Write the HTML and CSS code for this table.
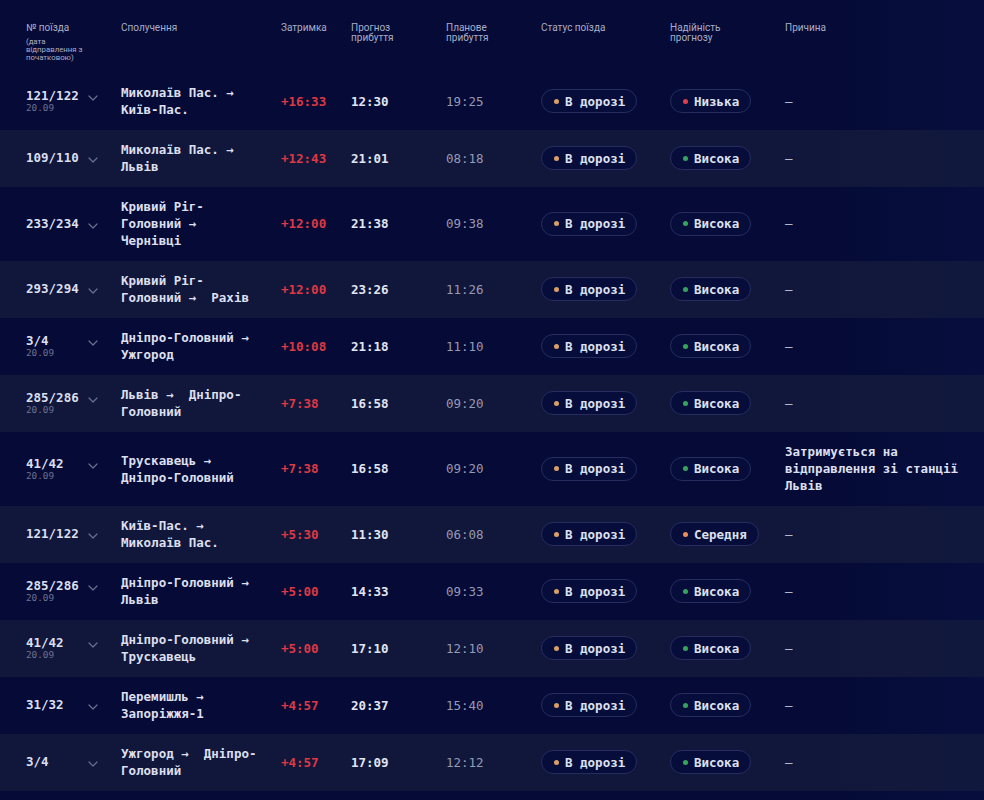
FILE: index.html
```html
<!DOCTYPE html>
<html lang="uk">
<head>
<meta charset="utf-8">
<title>Затримки поїздів</title>
<link rel="stylesheet" href="styles.css">
</head>
<body>
<div class="board">
  <div class="head">
    <div class="h-cell h-train">№ поїзда<span class="h-sub">(дата<br>відправлення з<br>початковою)</span></div>
    <div class="h-cell">Сполучення</div>
    <div class="h-cell">Затримка</div>
    <div class="h-cell">Прогноз<br>прибуття</div>
    <div class="h-cell">Планове<br>прибуття</div>
    <div class="h-cell">Статус поїзда</div>
    <div class="h-cell">Надійність<br>прогнозу</div>
    <div class="h-cell">Причина</div>
  </div>

  <div class="row">
    <div class="train"><div class="num-stack"><span class="num">121/122</span><span class="date">20.09</span></div><svg class="chev" viewBox="0 0 10 6"><polyline points="1,1 5,5 9,1"/></svg></div>
    <div class="route">Миколаїв Пас. →&nbsp; Київ-Пас.</div>
    <div class="delay">+16:33</div>
    <div class="fc">12:30</div>
    <div class="plan">19:25</div>
    <div><span class="badge"><i class="dot amber"></i>В дорозі</span></div>
    <div><span class="badge"><i class="dot red"></i>Низька</span></div>
    <div class="reason none">—</div>
  </div>

  <div class="row">
    <div class="train"><div class="num-stack"><span class="num">109/110</span></div><svg class="chev" viewBox="0 0 10 6"><polyline points="1,1 5,5 9,1"/></svg></div>
    <div class="route">Миколаїв Пас. →&nbsp; Львів</div>
    <div class="delay">+12:43</div>
    <div class="fc">21:01</div>
    <div class="plan">08:18</div>
    <div><span class="badge"><i class="dot amber"></i>В дорозі</span></div>
    <div><span class="badge"><i class="dot green"></i>Висока</span></div>
    <div class="reason none">—</div>
  </div>

  <div class="row">
    <div class="train"><div class="num-stack"><span class="num">233/234</span></div><svg class="chev" viewBox="0 0 10 6"><polyline points="1,1 5,5 9,1"/></svg></div>
    <div class="route">Кривий Ріг-Головний →&nbsp; Чернівці</div>
    <div class="delay">+12:00</div>
    <div class="fc">21:38</div>
    <div class="plan">09:38</div>
    <div><span class="badge"><i class="dot amber"></i>В дорозі</span></div>
    <div><span class="badge"><i class="dot green"></i>Висока</span></div>
    <div class="reason none">—</div>
  </div>

  <div class="row">
    <div class="train"><div class="num-stack"><span class="num">293/294</span></div><svg class="chev" viewBox="0 0 10 6"><polyline points="1,1 5,5 9,1"/></svg></div>
    <div class="route">Кривий Ріг-Головний →&nbsp; Рахів</div>
    <div class="delay">+12:00</div>
    <div class="fc">23:26</div>
    <div class="plan">11:26</div>
    <div><span class="badge"><i class="dot amber"></i>В дорозі</span></div>
    <div><span class="badge"><i class="dot green"></i>Висока</span></div>
    <div class="reason none">—</div>
  </div>

  <div class="row">
    <div class="train"><div class="num-stack"><span class="num">3/4</span><span class="date">20.09</span></div><svg class="chev" viewBox="0 0 10 6"><polyline points="1,1 5,5 9,1"/></svg></div>
    <div class="route">Дніпро-Головний →&nbsp; Ужгород</div>
    <div class="delay">+10:08</div>
    <div class="fc">21:18</div>
    <div class="plan">11:10</div>
    <div><span class="badge"><i class="dot amber"></i>В дорозі</span></div>
    <div><span class="badge"><i class="dot green"></i>Висока</span></div>
    <div class="reason none">—</div>
  </div>

  <div class="row">
    <div class="train"><div class="num-stack"><span class="num">285/286</span><span class="date">20.09</span></div><svg class="chev" viewBox="0 0 10 6"><polyline points="1,1 5,5 9,1"/></svg></div>
    <div class="route">Львів →&nbsp; Дніпро-Головний</div>
    <div class="delay">+7:38</div>
    <div class="fc">16:58</div>
    <div class="plan">09:20</div>
    <div><span class="badge"><i class="dot amber"></i>В дорозі</span></div>
    <div><span class="badge"><i class="dot green"></i>Висока</span></div>
    <div class="reason none">—</div>
  </div>

  <div class="row">
    <div class="train"><div class="num-stack"><span class="num">41/42</span><span class="date">20.09</span></div><svg class="chev" viewBox="0 0 10 6"><polyline points="1,1 5,5 9,1"/></svg></div>
    <div class="route">Трускавець →&nbsp; Дніпро-Головний</div>
    <div class="delay">+7:38</div>
    <div class="fc">16:58</div>
    <div class="plan">09:20</div>
    <div><span class="badge"><i class="dot amber"></i>В дорозі</span></div>
    <div><span class="badge"><i class="dot green"></i>Висока</span></div>
    <div class="reason">Затримується на відправлення зі станції Львів</div>
  </div>

  <div class="row">
    <div class="train"><div class="num-stack"><span class="num">121/122</span></div><svg class="chev" viewBox="0 0 10 6"><polyline points="1,1 5,5 9,1"/></svg></div>
    <div class="route">Київ-Пас. →&nbsp; Миколаїв Пас.</div>
    <div class="delay">+5:30</div>
    <div class="fc">11:30</div>
    <div class="plan">06:08</div>
    <div><span class="badge"><i class="dot amber"></i>В дорозі</span></div>
    <div><span class="badge"><i class="dot orange"></i>Середня</span></div>
    <div class="reason none">—</div>
  </div>

  <div class="row">
    <div class="train"><div class="num-stack"><span class="num">285/286</span><span class="date">20.09</span></div><svg class="chev" viewBox="0 0 10 6"><polyline points="1,1 5,5 9,1"/></svg></div>
    <div class="route">Дніпро-Головний →&nbsp; Львів</div>
    <div class="delay">+5:00</div>
    <div class="fc">14:33</div>
    <div class="plan">09:33</div>
    <div><span class="badge"><i class="dot amber"></i>В дорозі</span></div>
    <div><span class="badge"><i class="dot green"></i>Висока</span></div>
    <div class="reason none">—</div>
  </div>

  <div class="row">
    <div class="train"><div class="num-stack"><span class="num">41/42</span><span class="date">20.09</span></div><svg class="chev" viewBox="0 0 10 6"><polyline points="1,1 5,5 9,1"/></svg></div>
    <div class="route">Дніпро-Головний →&nbsp; Трускавець</div>
    <div class="delay">+5:00</div>
    <div class="fc">17:10</div>
    <div class="plan">12:10</div>
    <div><span class="badge"><i class="dot amber"></i>В дорозі</span></div>
    <div><span class="badge"><i class="dot green"></i>Висока</span></div>
    <div class="reason none">—</div>
  </div>

  <div class="row">
    <div class="train"><div class="num-stack"><span class="num">31/32</span></div><svg class="chev" viewBox="0 0 10 6"><polyline points="1,1 5,5 9,1"/></svg></div>
    <div class="route">Перемишль →&nbsp; Запоріжжя-1</div>
    <div class="delay">+4:57</div>
    <div class="fc">20:37</div>
    <div class="plan">15:40</div>
    <div><span class="badge"><i class="dot amber"></i>В дорозі</span></div>
    <div><span class="badge"><i class="dot green"></i>Висока</span></div>
    <div class="reason none">—</div>
  </div>

  <div class="row">
    <div class="train"><div class="num-stack"><span class="num">3/4</span></div><svg class="chev" viewBox="0 0 10 6"><polyline points="1,1 5,5 9,1"/></svg></div>
    <div class="route">Ужгород →&nbsp; Дніпро-Головний</div>
    <div class="delay">+4:57</div>
    <div class="fc">17:09</div>
    <div class="plan">12:12</div>
    <div><span class="badge"><i class="dot amber"></i>В дорозі</span></div>
    <div><span class="badge"><i class="dot green"></i>Висока</span></div>
    <div class="reason none">—</div>
  </div>
</div>
</body>
</html>
```

FILE: styles.css
```css
* { box-sizing: border-box; }

html, body {
  margin: 0;
  padding: 0;
  background: #050b36;
}

body {
  font-family: "DejaVu Sans Mono", "Liberation Mono", monospace;
  color: #dcdfee;
}

.board {
  width: 984px;
  min-height: 800px;
  background:
    linear-gradient(90deg, rgba(5, 11, 54, 0) 0%, rgba(5, 11, 54, 0) 85%, rgba(14, 30, 100, 0.18) 100%),
    #050b36;
}

.head,
.row {
  display: grid;
  grid-template-columns: 95px 160px 70px 95px 95px 129px 115px 1fr;
  padding-left: 26px;
}

.head {
  height: 72.5px;
  padding-top: 23px;
  align-items: start;
}

.h-cell {
  font-family: Roboto, "Noto Sans", sans-serif;
  font-size: 10px;
  line-height: 10px;
  color: #a9adc7;
}

.h-sub {
  display: block;
  margin-top: 5px;
  font-size: 7.8px;
  line-height: 8px;
}

.row {
  padding-top: 11.5px;
  padding-bottom: 11.5px;
  align-items: center;
  font-size: 12.5px;
  line-height: 17px;
  font-weight: bold;
}

.row:nth-child(odd) {
  background: rgba(22, 28, 62, 0.75);
}

.train {
  display: flex;
  align-items: flex-start;
}

.num-stack {
  display: flex;
  flex-direction: column;
  width: 62px;
}

.num {
  line-height: 14px;
  color: #dcdfee;
}

.date {
  font-size: 9.3px;
  line-height: 10px;
  font-weight: normal;
  color: #6c7292;
}

.chev {
  width: 10px;
  height: 6px;
  margin-top: 6px;
  fill: none;
  stroke: #68708f;
  stroke-width: 1.2;
  stroke-linecap: round;
  stroke-linejoin: round;
}

.route {
  width: 140px;
  color: #dcdfee;
}

.delay {
  color: #de3844;
}

.fc {
  color: #e2e5f1;
}

.plan {
  color: #959ab5;
  font-weight: normal;
}

.badge {
  display: inline-flex;
  align-items: center;
  gap: 6px;
  height: 24px;
  padding: 0 11px 0 12px;
  border: 1px solid #262d5e;
  border-radius: 12px;
  background: #070d3b;
  color: #dde0ef;
  font-size: 12.5px;
}

.dot {
  width: 5px;
  height: 5px;
  border-radius: 50%;
  display: inline-block;
}

.dot.amber { background: #d9a066; }
.dot.red { background: #e0404c; }
.dot.green { background: #35a45e; }
.dot.orange { background: #ec8d5a; }

.reason {
  padding-right: 10px;
  color: #dcdfee;
}

.reason.none {
  font-weight: normal;
  color: #bfc3d8;
}
```
